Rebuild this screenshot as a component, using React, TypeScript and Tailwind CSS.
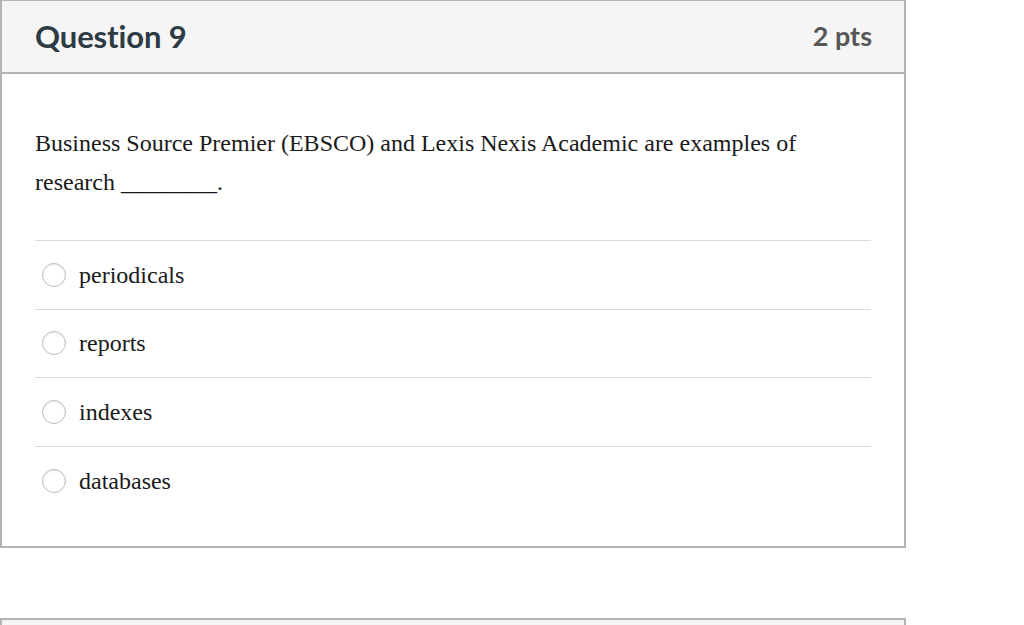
import React from "react";

const options = ["periodicals", "reports", "indexes", "databases"];

export default function App() {
  return (
    <div className="w-[1024px] h-[625px] overflow-hidden bg-white">
      <div className="w-[906px] border-2 border-[#b4b4b4] border-t-[1px]">
        {/* Header */}
        <div className="h-[73px] flex items-center justify-between pl-[33px] pr-[32px] bg-[#f5f5f5] border-b-2 border-[#b4b4b4] font-['Lato',sans-serif] font-bold">
          <h2 className="text-[31px] text-[#2d3b45] tracking-[-0.1px]">Question 9</h2>
          <span className="text-[27px] text-[#575757]">2 pts</span>
        </div>

        {/* Body */}
        <div className="px-[33px] pt-[50px] pb-[31px] font-['Liberation_Serif',serif] text-[24px] text-[#1a1a1a]">
          <p className="leading-[39px] pr-[60px]">
            Business Source Premier (EBSCO) and Lexis Nexis Academic are examples of research ________.
          </p>
          <div className="mt-[38px] border-t border-[#dcdcdc]">
            {options.map((o, i) => (
              <label
                key={o}
                className={`h-[68.5px] flex items-center gap-[13px] pl-[7px] ${
                  i < options.length - 1 ? "border-b border-[#dcdcdc]" : ""
                }`}
              >
                <span className="w-[24px] h-[24px] rounded-full border border-[#bdbdbd] bg-white shadow-[inset_0_1px_2px_rgba(0,0,0,0.1)]" />
                <span>{o}</span>
              </label>
            ))}
          </div>
        </div>
      </div>

      {/* Next question card peek */}
      <div className="mt-[70px] w-[906px] h-[40px] border-2 border-[#b4b4b4] bg-[#f5f5f5]" />
    </div>
  );
}
